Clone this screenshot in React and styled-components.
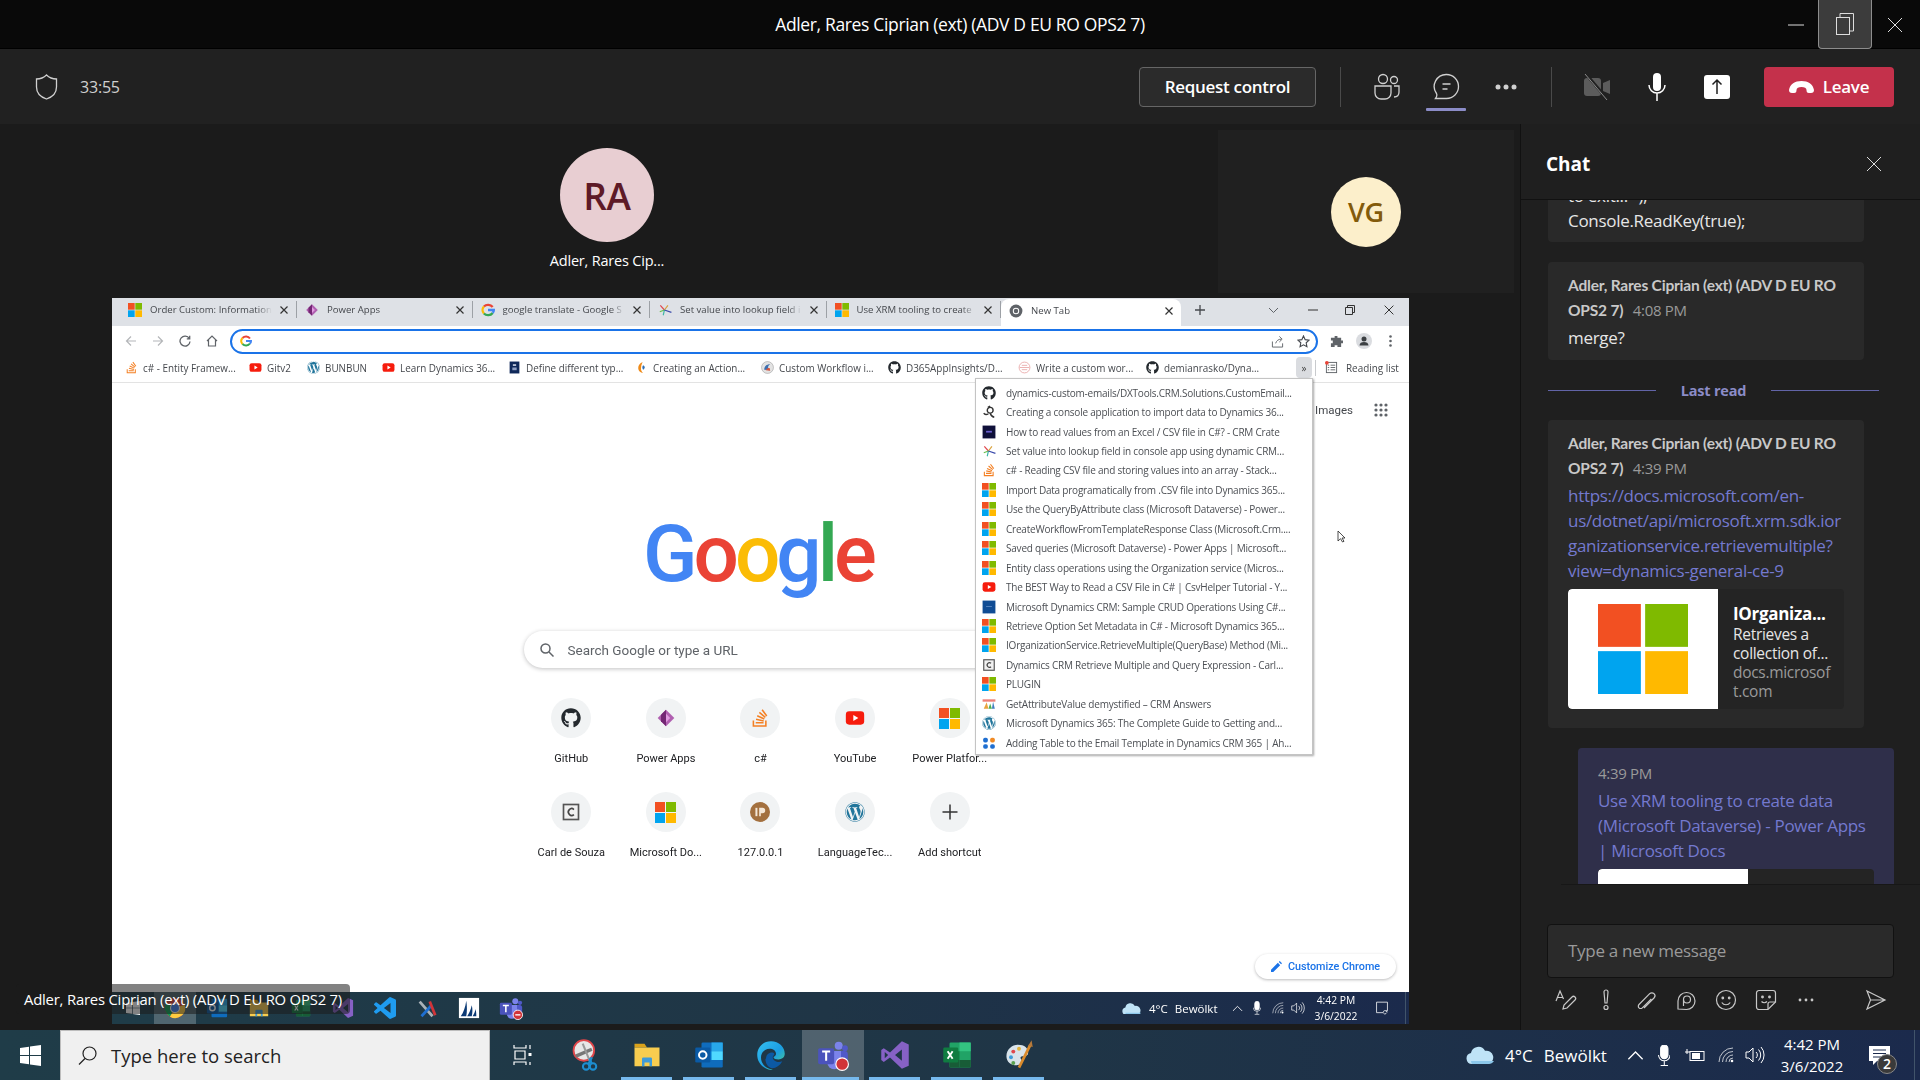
import styled, { createGlobalStyle } from "styled-components";
import { FaGithub, FaWordpress, FaStackOverflow } from "react-icons/fa";

const uiFont = `"Open Sans", "Noto Sans", sans-serif`;

const GlobalStyle = createGlobalStyle`
  html, body {
    margin: 0;
    width: 1920px;
    height: 1080px;
    overflow: hidden;
    background: #1b1b1b;
    font-family: ${uiFont};
  }
  * { box-sizing: border-box; }
`;

const tabs = [
  { title: "Order Custom: Information:", icon: "ms", w: 177 },
  { title: "Power Apps", icon: "powerapps", w: 176 },
  { title: "google translate - Google S", icon: "google", w: 178 },
  { title: "Set value into lookup field i", icon: "spark", w: 177 },
  { title: "Use XRM tooling to create", icon: "ms", w: 175 },
];

const bookmarks = [
  { label: "c# - Entity Framew...", icon: "so", w: 124 },
  { label: "Gitv2", icon: "yt", w: 58 },
  { label: "BUNBUN", icon: "wp", w: 75 },
  { label: "Learn Dynamics 36...", icon: "yt", w: 126 },
  { label: "Define different typ...", icon: "navy", w: 127 },
  { label: "Creating an Action...", icon: "flame", w: 126 },
  { label: "Custom Workflow i...", icon: "badge", w: 127 },
  { label: "D365AppInsights/D...", icon: "gh", w: 130 },
  { label: "Write a custom wor...", icon: "pink", w: 128 },
  { label: "demianrasko/Dyna...", icon: "gh", w: 150 },
];

const folderItems = [
  { label: "dynamics-custom-emails/DXTools.CRM.Solutions.CustomEmail...", icon: "gh" },
  { label: "Creating a console application to import data to Dynamics 36...", icon: "swirl" },
  { label: "How to read values from an Excel / CSV file in C#? - CRM Crate", icon: "crate" },
  { label: "Set value into lookup field in console app using dynamic CRM...", icon: "spark" },
  { label: "c# - Reading CSV file and storing values into an array - Stack...", icon: "so" },
  { label: "Import Data programatically from .CSV file into Dynamics 365...", icon: "ms" },
  { label: "Use the QueryByAttribute class (Microsoft Dataverse) - Power...", icon: "ms" },
  { label: "CreateWorkflowFromTemplateResponse Class (Microsoft.Crm....", icon: "ms" },
  { label: "Saved queries (Microsoft Dataverse) - Power Apps | Microsoft...", icon: "ms" },
  { label: "Entity class operations using the Organization service (Micros...", icon: "ms" },
  { label: "The BEST Way to Read a CSV File in C# | CsvHelper Tutorial - Y...", icon: "yt" },
  { label: "Microsoft Dynamics CRM: Sample CRUD Operations Using C#...", icon: "dyn" },
  { label: "Retrieve Option Set Metadata in C# - Microsoft Dynamics 365...", icon: "ms" },
  { label: "IOrganizationService.RetrieveMultiple(QueryBase) Method (Mi...", icon: "ms" },
  { label: "Dynamics CRM Retrieve Multiple and Query Expression - Carl...", icon: "carl" },
  { label: "PLUGIN", icon: "ms" },
  { label: "GetAttributeValue demystified – CRM Answers", icon: "chart" },
  { label: "Microsoft Dynamics 365: The Complete Guide to Getting and...", icon: "wp" },
  { label: "Adding Table to the Email Template in Dynamics CRM 365 | Ah...", icon: "dots" },
];

const shortcuts = [
  { label: "GitHub", icon: "gh" },
  { label: "Power Apps", icon: "powerapps" },
  { label: "c#", icon: "so" },
  { label: "YouTube", icon: "yt" },
  { label: "Power Platfor...", icon: "ms" },
  { label: "Carl de Souza", icon: "carl" },
  { label: "Microsoft Do...", icon: "ms" },
  { label: "127.0.0.1", icon: "ip" },
  { label: "LanguageTec...", icon: "wp" },
  { label: "Add shortcut", icon: "plus" },
];

/* ---------- favicons and app icons ---------- */

const MsLogo = ({ size = 14 }) => (
  <svg width={size} height={size} viewBox="0 0 21 21">
    <rect x="0" y="0" width="10" height="10" fill="#f25022" />
    <rect x="11" y="0" width="10" height="10" fill="#7fba00" />
    <rect x="0" y="11" width="10" height="10" fill="#00a4ef" />
    <rect x="11" y="11" width="10" height="10" fill="#ffb900" />
  </svg>
);

const Favicon = ({ kind, size = 14 }) => {
  const box = { width: size, height: size, viewBox: "0 0 24 24" };
  switch (kind) {
    case "ms":
      return <MsLogo size={size} />;
    case "gh":
      return <FaGithub size={size} color="#24292e" />;
    case "wp":
      return <FaWordpress size={size} color="#21759b" />;
    case "so":
      return <FaStackOverflow size={size} color="#f48024" />;
    case "yt":
      return (
        <svg {...box}>
          <rect x="1" y="4" width="22" height="16" rx="4" fill="#f61c0d" />
          <path d="M10 8.5l6 3.5-6 3.5z" fill="#fff" />
        </svg>
      );
    case "powerapps":
      return (
        <svg {...box}>
          <path d="M12 2l10 10-10 10L2 12z" fill="#b05fb0" />
          <path d="M12 2l-6 6v8l6 6z" fill="#742774" />
          <path d="M12 7l5 5-5 5z" fill="#e29be2" />
        </svg>
      );
    case "google":
      return (
        <svg {...box} fill="none" strokeWidth="4">
          <path d="M20 7a10 10 0 0 0-15-1" stroke="#ea4335" />
          <path d="M5 6a9 9 0 0 0 0 12" stroke="#fbbc05" />
          <path d="M5 18a10 10 0 0 0 15-1" stroke="#34a853" />
          <path d="M20 17c1.400-1.400 2-3 2-5H12" stroke="#4285f4" />
        </svg>
      );
    case "spark":
      return (
        <svg {...box} fill="none" strokeWidth="2">
          <path d="M11 12L4 4" stroke="#e0474c" />
          <path d="M11 12L3 15" stroke="#6abf4b" />
          <path d="M11 12l-2 9" stroke="#3fb6a8" />
          <path d="M11 12l6-8" stroke="#d9a13b" />
          <path d="M11 12l12 4" stroke="#3949ab" />
        </svg>
      );
    case "navy":
      return (
        <svg {...box}>
          <rect x="3" y="1" width="18" height="22" fill="#10295a" />
          <rect x="9" y="6" width="6" height="3" fill="#cfd6e6" />
          <rect x="8" y="12" width="8" height="5" fill="#8fa0c4" />
        </svg>
      );
    case "flame":
      return (
        <svg {...box}>
          <path d="M14 2C8 5 6 9 6 13c0 5 4 9 9 9-3-2-4-5-4-8 0-4 1-8 3-12z" fill="#ef8a17" />
          <path d="M15 8c-2 2-2 6 0 8 2-1 3-3 3-4 0-2-1-3-3-4z" fill="#2f6fb5" />
        </svg>
      );
    case "badge":
      return (
        <svg {...box}>
          <circle cx="12" cy="12" r="11" fill="#e3e3e3" stroke="#9a9a9a" />
          <path d="M6 16c0-6 4-10 11-10-3 2-4 4-4 6l4 5z" fill="#3c6fb0" />
          <path d="M9 17c1-3 3-5 7-4l1 5z" fill="#d9573f" />
        </svg>
      );
    case "pink":
      return (
        <svg {...box} fill="none" stroke="#e8a2a2" strokeWidth="1.5">
          <circle cx="12" cy="12" r="10" />
          <path d="M3 12h18M7 8h10M7 16h10" />
        </svg>
      );
    case "swirl":
      return (
        <svg {...box} fill="none" stroke="#333" strokeWidth="2.4">
          <path d="M3 14c2 3 5 3 8 1" />
          <circle cx="14" cy="9" r="5" />
          <path d="M14 14c1 3 3 6 7 7M10 4l4-2" />
        </svg>
      );
    case "crate":
      return (
        <svg {...box}>
          <rect x="1" y="1" width="22" height="22" fill="#0f1039" />
          <rect x="7" y="10" width="10" height="3" fill="#6b5fd0" />
        </svg>
      );
    case "dyn":
      return (
        <svg {...box}>
          <rect x="1" y="1" width="22" height="22" fill="#0f4c94" />
          <rect x="7" y="11" width="10" height="1" fill="#7fa5d8" />
        </svg>
      );
    case "carl":
      return (
        <svg {...box}>
          <rect x="3" y="3" width="18" height="18" fill="#f1f1f1" stroke="#555" strokeWidth="2" />
          <path d="M15.500 9a4 4 0 1 0 0 6" fill="none" stroke="#444" strokeWidth="2" />
        </svg>
      );
    case "chart":
      return (
        <svg {...box}>
          <rect x="1" y="4" width="22" height="4" fill="#ee7f76" />
          <path d="M3 20l5-11 3 11z" fill="#e8a33d" />
          <path d="M11 20l3-9 3 9z" fill="#4caf50" />
          <path d="M17 20l2-12 3 12z" fill="#3f7fbf" />
        </svg>
      );
    case "dots":
      return (
        <svg {...box}>
          <rect x="2" y="3" width="8" height="8" rx="3" fill="#1f6fd1" />
          <rect x="14" y="3" width="8" height="8" rx="3" fill="#f08a24" />
          <rect x="2" y="14" width="8" height="8" rx="3" fill="#1f6fd1" />
          <rect x="14" y="14" width="8" height="8" rx="3" fill="#1f6fd1" />
        </svg>
      );
    case "ip":
      return (
        <svg {...box}>
          <circle cx="12" cy="12" r="12" fill="#a3703f" />
          <rect x="6.500" y="7" width="2.400" height="10" fill="#f4e6d6" />
          <path d="M11 17V7h4a3 3 0 0 1 0 6.500h-2V17z" fill="#f4e6d6" />
        </svg>
      );
    case "plus":
      return (
        <svg {...box} fill="none" stroke="#333" strokeWidth="1.8">
          <path d="M12 3v18M3 12h18" />
        </svg>
      );
    case "chrome":
      return (
        <svg {...box}>
          <circle cx="12" cy="12" r="11" fill="#5f6368" />
          <circle cx="12" cy="12" r="5.500" fill="#fff" />
          <circle cx="12" cy="12" r="3.800" fill="#5f6368" />
        </svg>
      );
    default:
      return null;
  }
};

const ChromeApp = ({ size }) => (
  <svg width={size} height={size} viewBox="0 0 24 24">
    <circle cx="12" cy="12" r="11" fill="#db4437" />
    <path d="M12 12L6.500 21.500A11 11 0 0 1 2.500 6.500z" fill="#0f9d58" />
    <path d="M12 12l10.500-3.500A11 11 0 0 1 6.500 21.500z" fill="#ffcd40" />
    <circle cx="12" cy="12" r="5.500" fill="#fff" />
    <circle cx="12" cy="12" r="4.300" fill="#4285f4" />
  </svg>
);

const OutlookApp = ({ size }) => (
  <svg width={size} height={size} viewBox="0 0 24 24">
    <rect x="6" y="2" width="17" height="20" rx="1" fill="#0f6cbd" />
    <rect x="14" y="2" width="9" height="7" fill="#28a8ea" />
    <rect x="6" y="9" width="8" height="7" fill="#0078d4" />
    <rect x="14" y="9" width="9" height="7" fill="#50d9ff" />
    <rect x="1" y="6" width="12" height="12" rx="1" fill="#0a5aa5" />
    <circle cx="7" cy="12" r="3" fill="none" stroke="#fff" strokeWidth="1.6" />
  </svg>
);

const ExplorerApp = ({ size }) => (
  <svg width={size} height={size} viewBox="0 0 24 24">
    <path d="M2 3h8l2 3H2z" fill="#d9a21b" />
    <rect x="2" y="6" width="20" height="15" fill="#f8cd4f" />
    <path d="M8 21v-6a1 1 0 0 1 1-1h6a1 1 0 0 1 1 1v6h-2v-3h-4v3z" fill="#3f9bd8" />
  </svg>
);

const ExcelApp = ({ size }) => (
  <svg width={size} height={size} viewBox="0 0 24 24">
    <rect x="6" y="2" width="17" height="20" rx="1" fill="#21a366" />
    <rect x="14" y="2" width="9" height="7" fill="#33c481" />
    <rect x="6" y="9" width="8" height="7" fill="#107c41" />
    <rect x="14" y="16" width="9" height="6" fill="#185c37" />
    <rect x="6" y="16" width="8" height="6" fill="#185c37" />
    <rect x="1" y="6" width="12" height="12" rx="1" fill="#107c41" />
    <path d="M4.500 9l4 6M8.500 9l-4 6" stroke="#fff" strokeWidth="1.500" />
  </svg>
);

const VsApp = ({ size }) => (
  <svg width={size} height={size} viewBox="0 0 24 24">
    <path
      fillRule="evenodd"
      d="M17.500 1L23 3.500v17L17.500 23 8 14l-5 3.500-2-1.500V8l2-1.500L8 10zM17.500 7.500L12 12l5.500 4.500zM3.800 9.500v5L6.500 12z"
      fill="#8661c5"
    />
  </svg>
);

const VsCodeApp = ({ size }) => (
  <svg width={size} height={size} viewBox="0 0 24 24">
    <path
      d="M23.150 2.587L18.210.21a1.494 1.494 0 0 0-1.705.29l-9.460 8.630-4.120-3.128a.999.999 0 0 0-1.276.057L.327 7.261A1 1 0 0 0 .326 8.740L3.899 12 .326 15.260a1 1 0 0 0 .001 1.479L1.650 17.940a.999.999 0 0 0 1.276.057l4.120-3.128 9.460 8.630a1.492 1.492 0 0 0 1.704.29l4.942-2.377A1.500 1.500 0 0 0 24 20.060V3.939a1.500 1.500 0 0 0-.850-1.352zm-5.146 14.861L10.826 12l7.178-5.448v10.896z"
      fill="#1f9cf0"
    />
  </svg>
);

const EdgeApp = ({ size }) => (
  <svg width={size} height={size} viewBox="0 0 24 24">
    <defs>
      <linearGradient id="edgeGrad" x1="0" y1="0" x2="1" y2="1">
        <stop offset="0" stopColor="#35c1f1" />
        <stop offset="0.55" stopColor="#1b9de2" />
        <stop offset="1" stopColor="#54d77c" />
      </linearGradient>
    </defs>
    <path
      d="M12 1c6.500 0 11 4.800 11 10 0 3-2.500 4.500-5 4.500-2 0-4-.6-4-2 1.500-.5 2-1.500 2-2.500 0-2.500-2.500-4-5-4-4 0-7 3-7 7 0 5 4 9 9.500 9.500-.5 0-1 .5-1.500.5C5.500 23 1 18 1 12 1 6 5.500 1 12 1z"
      fill="url(#edgeGrad)"
    />
    <path d="M8 15c0-3 2-5 5-5 1.500 0 2 1 1.500 2-1.500 1-1.500 3 .5 4.500 1.500 1 3.500 1.500 6 .5-1.800 3.500-5 5.500-8 5.500-3 0-5.500-3.500-5.500-7.500z" fill="#0c59a4" />
  </svg>
);

const TeamsApp = ({ size, status }) => (
  <svg width={size} height={size} viewBox="0 0 28 28">
    <circle cx="19" cy="6" r="3.500" fill="#7b83eb" />
    <circle cx="24.500" cy="8" r="2.500" fill="#5059c9" />
    <rect x="16" y="10.500" width="11" height="11" rx="3" fill="#5059c9" />
    <path d="M9 10.500h12v10a6 6 0 0 1-12 0z" fill="#7b83eb" />
    <rect x="1" y="8" width="14" height="14" rx="1.500" fill="#4b53bc" />
    <path d="M4.500 11h7M8 11v8" stroke="#fff" strokeWidth="1.800" />
    <circle cx="22" cy="22" r="5.500" fill="#d13438" stroke="#fff" strokeWidth="1" />
    {status && <path d="M19 22h6" stroke="#fff" strokeWidth="1.600" />}
  </svg>
);

const SnipApp = ({ size }) => (
  <svg width={size} height={size} viewBox="0 0 28 28" fill="none">
    <circle cx="13" cy="10" r="9" fill="#e7e7e7" stroke="#e0464a" strokeWidth="1.600" />
    <path d="M6 15l14-6" stroke="#777" strokeWidth="3" />
    <path d="M12 4l6 15" stroke="#999" strokeWidth="1.800" />
    <path d="M18 17l2 5" stroke="#1d8fd1" strokeWidth="2" />
    <circle cx="21" cy="24" r="2.800" stroke="#1d8fd1" strokeWidth="1.800" />
    <path d="M20 16l-3 6" stroke="#1d8fd1" strokeWidth="2" />
    <circle cx="15" cy="24" r="2.800" stroke="#1d8fd1" strokeWidth="1.800" />
  </svg>
);

const PaintApp = ({ size }) => (
  <svg width={size} height={size} viewBox="0 0 28 28">
    <path d="M3 15c0-6 5-10 10-10 6 0 9 3 9 7 0 3-3 3-5 3-2 0-2 2-1 3 1 2 0 5-4 5-5 0-9-3-9-8z" fill="#d8e3ea" />
    <circle cx="9" cy="11" r="1.700" fill="#e0474c" />
    <circle cx="14" cy="8.500" r="1.700" fill="#e2b23b" />
    <circle cx="7" cy="16" r="1.700" fill="#3f9bd8" />
    <circle cx="9" cy="21" r="1.700" fill="#59a14f" />
    <path d="M14 25L24 5" stroke="#d98a2b" strokeWidth="2.400" />
    <path d="M22 6l3-5 1 6z" fill="#b5793a" />
  </svg>
);

const ToolApp = ({ size }) => (
  <svg width={size} height={size} viewBox="0 0 24 24" fill="none">
    <path d="M4 5l14 16" stroke="#aab2b8" strokeWidth="3" />
    <path d="M6 21L17 9" stroke="#1f6fd1" strokeWidth="3" />
    <path d="M15 5l6 15" stroke="#d13438" strokeWidth="3" />
  </svg>
);

const DynApp = ({ size }) => (
  <svg width={size} height={size} viewBox="0 0 24 24">
    <rect x="1" y="1" width="22" height="22" fill="#fff" />
    <path d="M3 21C6 17 8 11 9 4c1 6 1 12 0 17zM10 21c2-3 4-7 5-12 1 4 1 8 0 12zM16 21c1-2 3-5 3-8 1 3 1 6 1 8z" fill="#0b3a75" />
  </svg>
);

const WindowsLogo = ({ size = 21 }) => (
  <svg width={size} height={size} viewBox="0 0 21 21" fill="#fff">
    <path d="M0 3l9-1.300v8.300H0zM10 1.500L21 0v10H10zM0 11h9v8.300L0 18zM10 11h11v10l-11-1.500z" />
  </svg>
);

const CloudIcon = ({ w = 28 }) => (
  <svg width={w} height={w * 0.68} viewBox="0 0 28 19">
    <path d="M6 19a5.500 5.500 0 0 1-1-10.900A7.500 7.500 0 0 1 19 5.800 6.500 6.500 0 0 1 22 19z" fill="#bfe3f7" />
    <path d="M6 19a5.500 5.500 0 0 1-1-3h23a6.500 6.500 0 0 1-6 3z" fill="#8cc7ea" />
  </svg>
);

const ChevronUp = ({ w = 16 }) => (
  <svg width={w} height={w * 0.6} viewBox="0 0 16 10" fill="none" stroke="#fff" strokeWidth="1.300">
    <path d="M1 9l7-7 7 7" />
  </svg>
);

const MicTray = ({ h = 20 }) => (
  <svg width={h * 0.6} height={h} viewBox="0 0 12 20" fill="none" stroke="#fff" strokeWidth="1">
    <rect x="2.500" y="0" width="7" height="13" rx="3.500" fill="#fff" />
    <path d="M.5 9.500a5.500 5.500 0 0 0 11 0M6 15v4M2.500 19.500h7" />
  </svg>
);

const BatteryIcon = ({ w = 20 }) => (
  <svg width={w} height={w * 0.7} viewBox="0 0 20 14" fill="none" stroke="#fff">
    <rect x="5" y="3.500" width="14" height="9" />
    <rect x="7" y="5" width="8" height="6" fill="#fff" stroke="none" />
    <path d="M0 4h5M2 1v5" />
  </svg>
);

const WifiIcon = ({ w = 16 }) => (
  <svg width={w} height={w} viewBox="0 0 16 16" fill="none" stroke="#fff" strokeWidth=".9">
    <path d="M1 15A14 14 0 0 1 15 1M4.500 15A10.500 10.500 0 0 1 15 4.500M8 15a7 7 0 0 1 7-7M11 15a4 4 0 0 1 4-4" opacity=".8" />
    <circle cx="14" cy="14" r="1.300" fill="#fff" stroke="none" />
  </svg>
);

const VolumeIcon = ({ w = 20 }) => (
  <svg width={w} height={w} viewBox="0 0 20 20" fill="none" stroke="#fff" strokeWidth="1">
    <path d="M1 7h3l4-4v14l-4-4H1zM11 7a4 4 0 0 1 0 6M13.500 4.500a8 8 0 0 1 0 11M16 2a12 12 0 0 1 0 16" />
  </svg>
);

const NoteIcon = ({ w = 18 }) => (
  <svg width={w} height={w} viewBox="0 0 18 18" fill="none" stroke="#fff">
    <path d="M2 1.500h14v11h-4c-1 0-1 1-1.500 2.500H2z" />
    <path d="M11 16c1 1 3 1 4-1M14 13l2 1" />
  </svg>
);

/* ---------- top bars ---------- */

const Frame = styled.div`
  width: 1920px;
  height: 1080px;
  display: flex;
  flex-direction: column;
`;

const TitleBar = styled.header`
  height: 49px;
  flex-shrink: 0;
  background: #090909;
  border-bottom: 1px solid #000;
  display: flex;
  align-items: center;
  justify-content: center;
  position: relative;
`;

const WindowTitle = styled.div`
  color: #fff;
  font-size: 17.5px;
  letter-spacing: -0.35px;
`;

const WindowControls = styled.div`
  position: absolute;
  right: 0;
  top: 0;
  height: 49px;
  display: flex;
  align-items: stretch;
  padding-right: 2px;
`;

const WinBtn = styled.div`
  width: ${(p) => p.$w}px;
  display: flex;
  align-items: center;
  justify-content: center;
  ${(p) => p.$hot && "background: #3c3c3c; border: 1px solid #8d8d8d; border-top: 0; border-radius: 0 0 4px 4px;"}
`;

const MeetingBar = styled.div`
  height: 75px;
  flex-shrink: 0;
  background: #212121;
  display: flex;
  align-items: center;
  padding: 0 26px 0 35px;
`;

const Timer = styled.span`
  color: #d0d0d0;
  font-size: 16px;
  margin-left: 22px;
  letter-spacing: -0.2px;
`;

const Spacer = styled.div`
  flex: 1;
`;

const RequestBtn = styled.div`
  width: 177px;
  height: 40px;
  background: #2b2b2b;
  border: 1px solid #666;
  border-radius: 4px;
  color: #fff;
  font-size: 17px;
  font-weight: 600;
  letter-spacing: -0.3px;
  display: flex;
  align-items: center;
  justify-content: center;
`;

const BarDivider = styled.div`
  width: 1px;
  height: 40px;
  background: #4a4a4a;
  margin: 0 ${(p) => p.$mr ?? 15}px 0 ${(p) => p.$ml ?? 24}px;
`;

const BarIcon = styled.div`
  width: ${(p) => p.$w ?? 60}px;
  height: 44px;
  display: flex;
  align-items: center;
  justify-content: center;
  position: relative;
  ${(p) =>
    p.$active &&
    `&::after {
      content: "";
      position: absolute;
      left: 10px;
      right: 10px;
      bottom: -2px;
      height: 3px;
      background: #8b8cc7;
      border-radius: 1px;
    }`}
`;

const LeaveBtn = styled.div`
  width: 130px;
  height: 40px;
  margin-left: 17px;
  background: #c4314b;
  border-radius: 4px;
  color: #fff;
  font-size: 17px;
  font-weight: 600;
  letter-spacing: -0.3px;
  display: flex;
  align-items: center;
  justify-content: center;
  gap: 9px;
`;

/* ---------- stage ---------- */

const Body = styled.div`
  flex: 1;
  display: flex;
  min-height: 0;
`;

const Stage = styled.main`
  width: 1520px;
  background: #1b1b1b;
  display: flex;
  flex-direction: column;
  position: relative;
`;

const TileRow = styled.div`
  height: 174px;
  flex-shrink: 0;
  display: flex;
`;

const MainTile = styled.div`
  flex: 1;
  display: flex;
  flex-direction: column;
  align-items: center;
  padding: 24px 4px 0 0;
`;

const Avatar = styled.div`
  width: ${(p) => p.$size}px;
  height: ${(p) => p.$size}px;
  border-radius: 50%;
  background: ${(p) => p.$bg};
  color: ${(p) => p.$fg};
  font-size: ${(p) => p.$font}px;
  font-weight: 600;
  display: flex;
  align-items: center;
  justify-content: center;
  letter-spacing: -0.3px;
`;

const TileName = styled.div`
  margin-top: 9px;
  color: #fff;
  font-size: 14.5px;
  line-height: 20px;
  letter-spacing: -0.2px;
`;

const SideTile = styled.div`
  width: 296px;
  height: 163px;
  margin: 6px 6px 0 0;
  background: #202020;
  display: flex;
  align-items: center;
  justify-content: center;
`;

const Share = styled.div`
  width: 1297px;
  height: 726px;
  margin-left: 112px;
  display: flex;
  flex-direction: column;
  filter: blur(0.3px);
`;

const CaptionTag = styled.div`
  position: absolute;
  left: 16px;
  bottom: 16px;
  height: 30px;
  padding: 0 8px;
  display: flex;
  align-items: center;
  border-radius: 4px;
  background: rgba(27, 27, 27, 0.55);
  color: #fff;
  font-size: 14.85px;
  letter-spacing: -0.2px;
`;

/* ---------- remote chrome ---------- */

const ChromeWindow = styled.div`
  flex: 1;
  min-height: 0;
  display: flex;
  flex-direction: column;
  position: relative;
  background: #fff;
`;

const TabStrip = styled.div`
  height: 28px;
  flex-shrink: 0;
  background: #dee1e6;
  display: flex;
  align-items: stretch;
  padding-left: 8px;
  color: #45484d;
  font-size: 9.6px;
`;

const Tab = styled.div`
  width: ${(p) => p.$w}px;
  display: flex;
  align-items: center;
  gap: 8px;
  padding: 0 8px;
  position: relative;
  ${(p) =>
    p.$active
      ? "background: #fff; border-radius: 8px 8px 0 0; margin-top: 1px; padding-bottom: 4px;"
      : "border-right: 1px solid #9da1a6; margin: 3px 0 8px; "}
`;

const TabTitle = styled.span`
  flex: 1;
  white-space: nowrap;
  overflow: hidden;
  -webkit-mask-image: linear-gradient(90deg, #000 88%, transparent);
  mask-image: linear-gradient(90deg, #000 88%, transparent);
`;

const TabClose = styled.span`
  width: 8px;
  height: 8px;
  display: flex;
  flex-shrink: 0;
`;

const StripTool = styled.div`
  width: ${(p) => p.$w}px;
  margin-left: ${(p) => p.$ml ?? 0}px;
  padding-bottom: 4px;
  display: flex;
  align-items: center;
  justify-content: center;
`;

const ChromeToolbar = styled.div`
  height: 30px;
  flex-shrink: 0;
  display: flex;
  align-items: center;
  padding-left: 5px;
`;

const NavBtn = styled.div`
  width: 27px;
  height: 24px;
  display: flex;
  align-items: center;
  justify-content: center;
`;

const UrlBox = styled.div`
  width: 1088px;
  height: 25px;
  margin: 0 5px;
  border: 2px solid #1a73e8;
  border-radius: 13px;
  display: flex;
  align-items: center;
  padding: 0 6px 0 8px;
`;

const UrlTools = styled.div`
  margin-left: auto;
  display: flex;
  align-items: center;
  gap: 13px;
`;

const BookmarkBar = styled.div`
  height: 27px;
  flex-shrink: 0;
  display: flex;
  align-items: center;
  padding: 0 0 3px 13px;
  border-bottom: 1px solid #e3e3e3;
  color: #45484d;
  font-size: 9.9px;
`;

const Bookmark = styled.div`
  width: ${(p) => p.$w}px;
  display: flex;
  align-items: center;
  gap: 5px;
  white-space: nowrap;
`;

const MoreMarks = styled.div`
  width: 16px;
  height: 21px;
  border-radius: 4px;
  background: #dadce0;
  display: flex;
  align-items: center;
  justify-content: center;
  font-size: 10px;
  color: #444;
`;

const BarSep = styled.div`
  width: 1px;
  height: 16px;
  background: #c8cacd;
  margin: 0 9px 0 3px;
`;

const ReadingList = styled.div`
  display: flex;
  align-items: center;
  gap: 8px;
  white-space: nowrap;
`;

const FolderMenu = styled.div`
  position: absolute;
  left: 863px;
  top: 80px;
  width: 338px;
  height: 377px;
  padding: 4px 0;
  background: #fff;
  border: 1px solid #c4c4c4;
  box-shadow: 1px 1px 2px rgba(0, 0, 0, 0.35);
  z-index: 2;
`;

const FolderRow = styled.div`
  height: 19.44px;
  display: flex;
  align-items: center;
  padding-left: 6px;
  gap: 10px;
  color: #4c4f54;
  font-size: 10px;
  letter-spacing: -0.22px;
  white-space: nowrap;

  svg {
    flex-shrink: 0;
  }
`;

const NewTabPage = styled.div`
  flex: 1;
  min-height: 0;
  display: flex;
  flex-direction: column;
  align-items: center;
  position: relative;
  font-family: Roboto, "Open Sans", sans-serif;
`;

const TopLinks = styled.div`
  align-self: stretch;
  height: 54px;
  display: flex;
  align-items: center;
  justify-content: flex-end;
  padding-right: 21px;
  gap: 21px;
  color: #45484d;
  font-size: 11.5px;
`;

const GoogleMark = styled.div`
  margin: 67px 5px 0 0;
  height: 127px;
  font-family: Roboto, sans-serif;
  font-size: 80px;
  line-height: 100px;
  letter-spacing: -4px;
  font-weight: 500;
  display: flex;
`;

const Letter = styled.span`
  color: ${(p) => p.$c};
`;

const SearchBar = styled.div`
  width: 474px;
  height: 37px;
  flex-shrink: 0;
  border-radius: 19px;
  background: #fff;
  box-shadow: 0 1px 4px rgba(32, 33, 36, 0.28);
  display: flex;
  align-items: center;
  padding-left: 16px;
  gap: 14px;
  color: #5f6368;
  font-size: 13.5px;
`;

const ShortcutGrid = styled.div`
  margin-top: 30px;
  width: 473px;
  display: grid;
  grid-template-columns: repeat(5, 1fr);
  grid-auto-rows: 94.4px;
`;

const Shortcut = styled.div`
  display: flex;
  flex-direction: column;
  align-items: center;
  color: #202124;
  font-size: 11px;
  white-space: nowrap;
`;

const ShortcutDisc = styled.div`
  width: 40px;
  height: 40px;
  flex-shrink: 0;
  border-radius: 50%;
  background: #f1f3f4;
  display: flex;
  align-items: center;
  justify-content: center;
  margin-bottom: 14px;
`;

const CustomizeBtn = styled.div`
  margin: auto 13px 13px 0;
  align-self: flex-end;
  width: 141px;
  height: 25px;
  border-radius: 13px;
  background: #fff;
  box-shadow: 0 1px 3px rgba(32, 33, 36, 0.3);
  color: #1a73e8;
  font-size: 10.8px;
  font-weight: 500;
  display: flex;
  align-items: center;
  justify-content: center;
  gap: 6px;
`;

const Cursor = styled.svg`
  position: absolute;
  left: 1225px;
  top: 232px;
  z-index: 3;
`;

/* ---------- taskbars ---------- */

const Taskbar = styled.div`
  height: ${(p) => p.$h}px;
  flex-shrink: 0;
  display: flex;
  align-items: stretch;
  background: linear-gradient(90deg, #1f3c48 0%, #1f3546 55%, #1b2a4c 100%);
  color: #fff;
`;

const TaskSlot = styled.div`
  width: ${(p) => p.$w}px;
  flex-shrink: 0;
  display: flex;
  align-items: center;
  justify-content: center;
  position: relative;
  ${(p) => p.$lit && "background: rgba(255,255,255,.22);"}
  ${(p) =>
    p.$running &&
    `&::after {
      content: "";
      position: absolute;
      left: ${p.$lit ? 0 : 5}px;
      right: ${p.$lit ? 5 : 6}px;
      bottom: 0;
      height: 3px;
      background: #76b9ed;
    }`}
`;

const WinStart = styled.div`
  width: 60px;
  flex-shrink: 0;
  display: flex;
  align-items: center;
  justify-content: center;
`;

const SearchField = styled.div`
  width: 430px;
  flex-shrink: 0;
  background: #f0f0f0;
  border: 1px solid #bdbdbd;
  border-width: 1px 1px 0 1px;
  display: flex;
  align-items: center;
  padding-left: 17px;
  gap: 14px;
  color: #222;
  font-size: 18.5px;
`;

const Tray = styled.div`
  margin-left: auto;
  display: flex;
  align-items: center;
  font-size: ${(p) => p.$font}px;
  position: relative;
`;

const TrayItem = styled.div`
  width: ${(p) => p.$w}px;
  margin-left: ${(p) => p.$ml ?? 0}px;
  flex-shrink: 0;
  display: flex;
  align-items: center;
  justify-content: ${(p) => (p.$start ? "flex-start" : "center")};
  gap: ${(p) => p.$gap ?? 0}px;
  white-space: nowrap;
  position: relative;
`;

const Clock = styled.div`
  text-align: center;
  font-size: ${(p) => p.$size}px;
  line-height: ${(p) => p.$lh}px;
`;

const TrayEdge = styled.div`
  width: 1px;
  height: 100%;
  background: #41546a;
  margin: 0 ${(p) => p.$mr}px 0 ${(p) => p.$ml}px;
`;

const NoteBadge = styled.span`
  position: absolute;
  right: -3px;
  bottom: -9px;
  width: 20px;
  height: 20px;
  border-radius: 50%;
  border: 1px solid #888;
  background: #3a3a3a;
  font-size: 14px;
  font-weight: 600;
  display: flex;
  align-items: center;
  justify-content: center;
`;

/* ---------- chat ---------- */

const ChatPanel = styled.aside`
  flex: 1;
  min-width: 0;
  background: #1f1f1f;
  border-left: 1px solid #111;
  display: flex;
  flex-direction: column;
`;

const ChatHeader = styled.div`
  height: 76px;
  flex-shrink: 0;
  border-bottom: 1px solid #111;
  display: flex;
  align-items: center;
  justify-content: space-between;
  padding: 5px 38px 0 25px;
  color: #fff;
  font-size: 19px;
  font-weight: 700;
`;

const MessageList = styled.div`
  height: 684px;
  flex-shrink: 0;
  overflow: hidden;
  display: flex;
  flex-direction: column;
  padding-left: 27px;
`;

const Bubble = styled.div`
  width: 316px;
  margin-left: ${(p) => (p.$own ? 30 : 0)}px;
  margin-top: ${(p) => p.$top ?? 20}px;
  flex-shrink: 0;
  padding: ${(p) => (p.$own ? 12 : 11)}px 20px ${(p) => p.$pb ?? 9}px;
  border-radius: 4px;
  background: ${(p) => (p.$own ? "#2f2f4a" : "#292929")};
  color: #e6e6e6;
  font-size: 17px;
  line-height: 25px;
  letter-spacing: -0.3px;
`;

const Author = styled.div`
  font-family: Lato, "Open Sans", sans-serif;
  font-size: 15.5px;
  font-weight: 700;
  color: #c8c8c8;
  letter-spacing: -0.2px;
`;

const Stamp = styled.span`
  font-family: "Open Sans", sans-serif;
  font-size: 15px;
  font-weight: 400;
  color: #9a9a9a;
  letter-spacing: -0.3px;
  margin-left: ${(p) => p.$ml ?? 0}px;
`;

const MsgBody = styled.div`
  margin-top: 2px;
`;

const MsgLink = styled.div`
  margin-top: 2px;
  color: #7479cf;
  word-break: break-all;
`;

const LastRead = styled.div`
  height: 20px;
  margin-top: 20px;
  width: 331px;
  flex-shrink: 0;
  display: flex;
  align-items: center;
  justify-content: space-between;
  color: #8b8cc7;
  font-size: 14.5px;
  font-weight: 700;
  letter-spacing: -0.2px;
`;

const ReadLine = styled.div`
  width: 108px;
  height: 1px;
  background: #6264a7;
`;

const LinkCard = styled.div`
  width: 276px;
  height: 120px;
  margin-top: 6px;
  background: #242424;
  border-radius: 4px;
  display: flex;
  overflow: hidden;
`;

const CardImage = styled.div`
  width: 150px;
  flex-shrink: 0;
  background: #fff;
  border-radius: 4px 0 0 4px;
  display: flex;
  align-items: center;
  justify-content: center;
`;

const CardText = styled.div`
  padding: 14px 0 0 15px;
  font-size: 15.5px;
  line-height: 19px;
  white-space: nowrap;
  letter-spacing: -0.3px;
`;

const CardTitle = styled.div`
  color: #fff;
  font-weight: 700;
  font-size: 17px;
  line-height: 22px;
`;

const CardHost = styled.div`
  color: #9a9a9a;
`;

const Composer = styled.div`
  flex: 1;
  border-top: 1px solid #171717;
  margin-left: 40px;
  padding-top: 39px;
`;

const InputBox = styled.div`
  width: 347px;
  height: 54px;
  margin-left: -14px;
  border-radius: 4px;
  border: 1px solid #111;
  background: #2a2a2a;
  color: #9a9a9a;
  font-size: 17px;
  letter-spacing: -0.3px;
  display: flex;
  align-items: center;
  padding: 0 0 2px 20px;
`;

const ComposerTools = styled.div`
  margin: 7px 0 0 -15px;
  display: flex;
  align-items: center;
  width: 350px;
`;

const ComposerTool = styled.div`
  width: 40px;
  height: 30px;
  display: flex;
  align-items: center;
  justify-content: center;
`;

const ThinX = ({ size = 16, color = "#ddd", width = 1 }) => (
  <svg width={size} height={size} viewBox="0 0 16 16" fill="none" stroke={color} strokeWidth={width}>
    <path d="M1 1l14 14M15 1L1 15" />
  </svg>
);

const strokeIcon = { fill: "none", stroke: "#c8c8c8", strokeWidth: 1.2, width: 22, height: 22, viewBox: "0 0 22 22" };

const composerIcons = [
  <svg {...strokeIcon} key="format">
    <path d="M1 12L5 2l3.500 8M2.500 8.500H7.500" />
    <path d="M8 20l1-4 8-8a2 2 0 0 1 3 3l-8 8z" />
  </svg>,
  <svg {...strokeIcon} key="urgent">
    <path d="M9 3a2 2 0 0 1 4 0l-1 11h-2z" />
    <circle cx="11" cy="18.500" r="2" />
  </svg>,
  <svg {...strokeIcon} key="attach">
    <path d="M9 19l10-10a3 3 0 0 0-4.300-4.300L4 15.500a2.300 2.300 0 0 0 3.300 3.300l9-9" />
  </svg>,
  <svg {...strokeIcon} key="loop">
    <path d="M3 20v-8a8.500 8.500 0 1 1 8.500 8.500z" />
    <circle cx="12" cy="10.500" r="3.500" />
    <path d="M8.500 11v6" />
  </svg>,
  <svg {...strokeIcon} key="emoji">
    <circle cx="11" cy="11" r="9.500" />
    <circle cx="7.800" cy="9" r=".8" fill="#c8c8c8" />
    <circle cx="14.200" cy="9" r=".8" fill="#c8c8c8" />
    <path d="M6.800 13.500c2 3 6.400 3 8.400 0" />
  </svg>,
  <svg {...strokeIcon} key="sticker">
    <path d="M4 1.500h14a2.500 2.500 0 0 1 2.500 2.500v9l-7.500 7.500H4A2.500 2.500 0 0 1 1.500 18V4A2.500 2.500 0 0 1 4 1.500z" />
    <path d="M13 20v-5a2 2 0 0 1 2-2h5.500" />
    <circle cx="7.500" cy="8" r=".8" fill="#c8c8c8" />
    <circle cx="14.500" cy="8" r=".8" fill="#c8c8c8" />
    <path d="M6.500 12.500c1.500 1.500 4 1.500 5.500 0" />
  </svg>,
  <svg width="18" height="6" viewBox="0 0 18 6" fill="#c8c8c8" key="more">
    <circle cx="3" cy="3" r="1.400" />
    <circle cx="9" cy="3" r="1.400" />
    <circle cx="15" cy="3" r="1.400" />
  </svg>,
];

const FolderCard = ({ children, logo }) => (
  <LinkCard>
    <CardImage>{logo && <MsLogo size={90} />}</CardImage>
    {children}
  </LinkCard>
);

const ChromeTabs = () => (
  <TabStrip>
    {tabs.map((tab) => (
      <Tab key={tab.title} $w={tab.w}>
        <Favicon kind={tab.icon} size={14} />
        <TabTitle>{tab.title}</TabTitle>
        <TabClose>
          <ThinX size={8} color="#333" width={2.4} />
        </TabClose>
      </Tab>
    ))}
    <Tab $w={180} $active>
      <Favicon kind="chrome" size={14} />
      <TabTitle>New Tab</TabTitle>
      <TabClose>
        <ThinX size={8} color="#333" width={2.4} />
      </TabClose>
    </Tab>
    <StripTool $w={32} $ml={4}>
      <svg width="12" height="12" viewBox="0 0 12 12" stroke="#45484d" strokeWidth="1.300">
        <path d="M6 1v10M1 6h10" />
      </svg>
    </StripTool>
    <StripTool $w={24} $ml={45}>
      <svg width="11" height="7" viewBox="0 0 11 7" fill="none" stroke="#5f6368">
        <path d="M1 1l4.500 4.500L10 1" />
      </svg>
    </StripTool>
    <StripTool $w={36} $ml={10}>
      <svg width="10" height="2" viewBox="0 0 10 2" stroke="#333">
        <path d="M0 1h10" />
      </svg>
    </StripTool>
    <StripTool $w={38}>
      <svg width="10" height="10" viewBox="0 0 10 10" fill="none" stroke="#333">
        <path d="M.5 2.500h7v7h-7zM2.500 2.500v-2h7v7h-2" />
      </svg>
    </StripTool>
    <StripTool $w={40}>
      <ThinX size={10} color="#333" width={1.6} />
    </StripTool>
  </TabStrip>
);

const ChromeBar = () => (
  <ChromeToolbar>
    <NavBtn>
      <svg width="12" height="12" viewBox="0 0 12 12" fill="none" stroke="#b4b6b9" strokeWidth="1.200">
        <path d="M11 6H1.500M6 1.500L1.500 6 6 10.500" />
      </svg>
    </NavBtn>
    <NavBtn>
      <svg width="12" height="12" viewBox="0 0 12 12" fill="none" stroke="#b4b6b9" strokeWidth="1.200">
        <path d="M1 6h9.500M6 1.500L10.500 6 6 10.500" />
      </svg>
    </NavBtn>
    <NavBtn>
      <svg width="12" height="12" viewBox="0 0 12 12" fill="none" stroke="#5f6368" strokeWidth="1.300">
        <path d="M10.300 3.500A5 5 0 1 0 11 6.500M10.700 .8v3H7.800" />
      </svg>
    </NavBtn>
    <NavBtn>
      <svg width="12" height="12" viewBox="0 0 12 12" fill="none" stroke="#5f6368" strokeWidth="1.200">
        <path d="M1 6l5-5 5 5M2.500 5v6h7V5" />
      </svg>
    </NavBtn>
    <UrlBox>
      <Favicon kind="google" size={12} />
      <UrlTools>
        <svg width="13" height="13" viewBox="0 0 14 14" fill="none" stroke="#5f6368">
          <path d="M1.500 7v6h11V9M5 9c1-3 3-4.500 6-4.500M9 1.500l3 3-3 3" />
        </svg>
        <svg width="13" height="13" viewBox="0 0 14 14" fill="none" stroke="#45484d" strokeWidth="1.200">
          <path d="M7 1l1.800 4 4.200.5-3.100 2.900.8 4.300L7 10.600l-3.700 2.100.8-4.300L1 5.500 5.200 5z" />
        </svg>
      </UrlTools>
    </UrlBox>
    <NavBtn>
      <svg width="13" height="13" viewBox="0 0 14 14" fill="#5f6368">
        <path d="M5 1h3v2h4v3h2v3h-2v4H8v-2H5v2H1V9h2V6H1V3h4z" />
      </svg>
    </NavBtn>
    <NavBtn>
      <svg width="16" height="16" viewBox="0 0 16 16">
        <circle cx="8" cy="8" r="8" fill="#dadce0" />
        <circle cx="8" cy="6" r="2.500" fill="#3c4043" />
        <path d="M3.500 12.500c0-2.500 2-3.500 4.500-3.500s4.500 1 4.500 3.500z" fill="#3c4043" />
      </svg>
    </NavBtn>
    <NavBtn>
      <svg width="3" height="12" viewBox="0 0 3 12" fill="#5f6368">
        <circle cx="1.500" cy="1.500" r="1.300" />
        <circle cx="1.500" cy="6" r="1.300" />
        <circle cx="1.500" cy="10.500" r="1.300" />
      </svg>
    </NavBtn>
  </ChromeToolbar>
);

const Bookmarks = () => (
  <BookmarkBar>
    {bookmarks.map((mark) => (
      <Bookmark key={mark.label} $w={mark.w}>
        <Favicon kind={mark.icon} size={13} />
        {mark.label}
      </Bookmark>
    ))}
    <MoreMarks>»</MoreMarks>
    <BarSep />
    <ReadingList>
      <svg width="13" height="13" viewBox="0 0 14 14" fill="none" stroke="#5f6368">
        <rect x="1.500" y="1.500" width="11" height="11" />
        <path d="M6 4.500h5M6 7h5M6 9.500h5M3 4.500h1.500M3 7h1.500M3 9.500h1.500" />
        <circle cx="2" cy="2" r="2" fill="#ea4335" stroke="none" />
      </svg>
      Reading list
    </ReadingList>
  </BookmarkBar>
);

const NewTab = () => (
  <NewTabPage>
    <TopLinks>
      Images
      <svg width="14" height="14" viewBox="0 0 14 14" fill="#5f6368">
        {[2, 7, 12].flatMap((cy) =>
          [2, 7, 12].map((cx) => <circle key={`${cx}-${cy}`} cx={cx} cy={cy} r="1.600" />)
        )}
      </svg>
    </TopLinks>
    <GoogleMark>
      <Letter $c="#4285f4">G</Letter>
      <Letter $c="#ea4335">o</Letter>
      <Letter $c="#fbbc05">o</Letter>
      <Letter $c="#4285f4">g</Letter>
      <Letter $c="#34a853">l</Letter>
      <Letter $c="#ea4335">e</Letter>
    </GoogleMark>
    <SearchBar>
      <svg width="14" height="14" viewBox="0 0 14 14" fill="none" stroke="#5f6368" strokeWidth="1.500">
        <circle cx="5.500" cy="5.500" r="4.500" />
        <path d="M9 9l4.500 4.500" />
      </svg>
      Search Google or type a URL
    </SearchBar>
    <ShortcutGrid>
      {shortcuts.map((item) => (
        <Shortcut key={item.label}>
          <ShortcutDisc>
            <Favicon kind={item.icon} size={item.icon === "ms" ? 21 : 20} />
          </ShortcutDisc>
          {item.label}
        </Shortcut>
      ))}
    </ShortcutGrid>
    <CustomizeBtn>
      <svg width="11" height="11" viewBox="0 0 12 12" fill="#1a73e8">
        <path d="M0 12V9.500L7.500 2 10 4.500 2.500 12zM8.500 1L9.500 0 12 2.500 11 3.500z" />
      </svg>
      Customize Chrome
    </CustomizeBtn>
  </NewTabPage>
);

const RemoteTaskbar = () => (
  <Taskbar $h={32}>
    <TaskSlot $w={42}>
      <WindowsLogo size={14} />
    </TaskSlot>
    <TaskSlot $w={42} $lit>
      <ChromeApp size={22} />
    </TaskSlot>
    <TaskSlot $w={42}>
      <OutlookApp size={22} />
    </TaskSlot>
    <TaskSlot $w={42}>
      <ExplorerApp size={22} />
    </TaskSlot>
    <TaskSlot $w={42}>
      <ExcelApp size={20} />
    </TaskSlot>
    <TaskSlot $w={42}>
      <VsApp size={22} />
    </TaskSlot>
    <TaskSlot $w={42}>
      <VsCodeApp size={22} />
    </TaskSlot>
    <TaskSlot $w={42}>
      <ToolApp size={22} />
    </TaskSlot>
    <TaskSlot $w={42}>
      <DynApp size={22} />
    </TaskSlot>
    <TaskSlot $w={42}>
      <TeamsApp size={24} status />
    </TaskSlot>
    <Tray $font={11.5}>
      <TrayItem $w={22}>
        <CloudIcon w={19} />
      </TrayItem>
      <TrayItem $w={74} $ml={7} $start $gap={7}>
        <span>4°C</span>
        <span>Bewölkt</span>
      </TrayItem>
      <TrayItem $w={12} $ml={8}>
        <ChevronUp w={11} />
      </TrayItem>
      <TrayItem $w={8} $ml={10}>
        <MicTray h={14} />
      </TrayItem>
      <TrayItem $w={14} $ml={10}>
        <WifiIcon w={12} />
      </TrayItem>
      <TrayItem $w={14} $ml={6}>
        <VolumeIcon w={14} />
      </TrayItem>
      <TrayItem $w={56} $ml={3}>
        <Clock $size={10.3} $lh={16}>
          4:42 PM
          <br />
          3/6/2022
        </Clock>
      </TrayItem>
      <TrayItem $w={16} $ml={10}>
        <NoteIcon w={14} />
      </TrayItem>
      <TrayEdge $ml={15} $mr={3} />
    </Tray>
  </Taskbar>
);

const LocalTaskbar = () => (
  <Taskbar $h={50}>
    <WinStart>
      <WindowsLogo />
    </WinStart>
    <SearchField>
      <svg width="19" height="19" viewBox="0 0 19 19" fill="none" stroke="#222" strokeWidth="1.200">
        <circle cx="11.500" cy="7.500" r="6.500" />
        <path d="M7 12.500L1 18.500" />
      </svg>
      Type here to search
    </SearchField>
    <TaskSlot $w={64}>
      <svg width="20" height="22" viewBox="0 0 20 22" fill="none" stroke="#fff" strokeWidth="1.200">
        <path d="M2 1v3h12V1M3 7h10v8H3zM2 21v-3h12v3M18 1v4M18 18v3" />
        <rect x="16.500" y="9" width="3" height="3" fill="#fff" stroke="none" />
      </svg>
    </TaskSlot>
    <TaskSlot $w={62}>
      <SnipApp size={32} />
    </TaskSlot>
    <TaskSlot $w={62} $running>
      <ExplorerApp size={30} />
    </TaskSlot>
    <TaskSlot $w={62} $running>
      <OutlookApp size={30} />
    </TaskSlot>
    <TaskSlot $w={62} $running>
      <EdgeApp size={30} />
    </TaskSlot>
    <TaskSlot $w={62} $running $lit>
      <TeamsApp size={32} />
    </TaskSlot>
    <TaskSlot $w={62} $running>
      <VsApp size={30} />
    </TaskSlot>
    <TaskSlot $w={62} $running>
      <ExcelApp size={30} />
    </TaskSlot>
    <TaskSlot $w={62} $running>
      <PaintApp size={32} />
    </TaskSlot>
    <Tray $font={17}>
      <TrayItem $w={40}>
        <CloudIcon w={28} />
      </TrayItem>
      <TrayItem $w={112} $ml={5} $start $gap={11}>
        <span>4°C</span>
        <span>Bewölkt</span>
      </TrayItem>
      <TrayItem $w={18} $ml={9}>
        <ChevronUp w={17} />
      </TrayItem>
      <TrayItem $w={14} $ml={13}>
        <MicTray h={21} />
      </TrayItem>
      <TrayItem $w={20} $ml={14}>
        <BatteryIcon w={20} />
      </TrayItem>
      <TrayItem $w={18} $ml={12}>
        <WifiIcon w={16} />
      </TrayItem>
      <TrayItem $w={20} $ml={10}>
        <VolumeIcon w={20} />
      </TrayItem>
      <TrayItem $w={90} $ml={2}>
        <Clock $size={15} $lh={22}>
          4:42 PM
          <br />
          3/6/2022
        </Clock>
      </TrayItem>
      <TrayItem $w={30} $ml={7}>
        <svg width="21" height="19" viewBox="0 0 21 19" fill="#fff">
          <path d="M0 0h21v15H8l-4 4v-4H0z" />
          <path d="M4 4h13M4 7.500h13M4 11h8" stroke="#1b2a4c" />
        </svg>
        <NoteBadge>2</NoteBadge>
      </TrayItem>
      <TrayEdge $ml={20} $mr={5} />
    </Tray>
  </Taskbar>
);

const Chat = () => (
  <ChatPanel>
    <ChatHeader>
      Chat
      <ThinX size={16} />
    </ChatHeader>
    <MessageList>
      <Bubble $top={-28}>
        to exit..." );
        <br />
        Console.ReadKey(true);
      </Bubble>
      <Bubble $pb={10}>
        <Author>
          Adler, Rares Ciprian (ext) (ADV D EU RO OPS2 7) <Stamp $ml={6}>4:08 PM</Stamp>
        </Author>
        <MsgBody>merge?</MsgBody>
      </Bubble>
      <LastRead>
        <ReadLine />
        Last read
        <ReadLine />
      </LastRead>
      <Bubble $top={20} $pb={19}>
        <Author>
          Adler, Rares Ciprian (ext) (ADV D EU RO OPS2 7) <Stamp $ml={6}>4:39 PM</Stamp>
        </Author>
        <MsgLink>
          https://docs.microsoft.com/en-
          <br />
          us/dotnet/api/microsoft.xrm.sdk.ior
          <br />
          ganizationservice.retrievemultiple?
          <br />
          view=dynamics-general-ce-9
        </MsgLink>
        <FolderCard logo>
          <CardText>
            <CardTitle>IOrganiza...</CardTitle>
            Retrieves a
            <br />
            collection of...
            <CardHost>
              docs.microsof
              <br />
              t.com
            </CardHost>
          </CardText>
        </FolderCard>
      </Bubble>
      <Bubble $own>
        <Stamp>4:39 PM</Stamp>
        <MsgLink>
          Use XRM tooling to create data
          <br />
          (Microsoft Dataverse) - Power Apps
          <br />| Microsoft Docs
        </MsgLink>
        <FolderCard />
      </Bubble>
    </MessageList>
    <Composer>
      <InputBox>Type a new message</InputBox>
      <ComposerTools>
        {composerIcons.map((icon) => (
          <ComposerTool key={icon.key}>{icon}</ComposerTool>
        ))}
        <Spacer />
        <ComposerTool>
          <svg {...strokeIcon}>
            <path d="M2 2l18 9-18 9 3.500-9zM5.500 11H20" />
          </svg>
        </ComposerTool>
      </ComposerTools>
    </Composer>
  </ChatPanel>
);

export default function App() {
  return (
    <Frame>
      <GlobalStyle />
      <TitleBar>
        <WindowTitle>Adler, Rares Ciprian (ext) (ADV D EU RO OPS2 7)</WindowTitle>
        <WindowControls>
          <WinBtn $w={44}>
            <svg width="16" height="2" viewBox="0 0 16 2" stroke="#ddd">
              <path d="M0 1h16" />
            </svg>
          </WinBtn>
          <WinBtn $w={54} $hot>
            <svg width="18" height="22" viewBox="0 0 18 22" fill="none" stroke="#ddd">
              <rect x=".5" y="4.500" width="13" height="17" />
              <path d="M4 4V.5h13.500V18H14" />
            </svg>
          </WinBtn>
          <WinBtn $w={46}>
            <ThinX size={16} />
          </WinBtn>
        </WindowControls>
      </TitleBar>
      <MeetingBar>
        <svg width="23" height="26" viewBox="0 0 23 26" fill="none" stroke="#d0d0d0" strokeWidth="1.300">
          <path d="M11.500 1c2 2 6 4 10 4v8c0 6-4 10-10 12C5.500 23 1.500 19 1.500 13V5c4 0 8-2 10-4z" />
        </svg>
        <Timer>33:55</Timer>
        <Spacer />
        <RequestBtn>Request control</RequestBtn>
        <BarDivider />
        <BarIcon>
          <svg width="27" height="27" viewBox="0 0 27 27" fill="none" stroke="#d0d0d0" strokeWidth="1.300">
            <circle cx="10" cy="6" r="4.500" />
            <circle cx="21" cy="7" r="3.500" />
            <path d="M2 13h16v7a6 6 0 0 1-6 6H8a6 6 0 0 1-6-6zM21 13h5v6c0 3-2 5-5 5" />
          </svg>
        </BarIcon>
        <BarIcon $active>
          <svg width="27" height="27" viewBox="0 0 27 27" fill="none" stroke="#d0d0d0" strokeWidth="1.300">
            <path d="M13.500 1.500a12 12 0 0 1 0 24H2.500c1.500-2 2-3 1-5A12 12 0 0 1 13.500 1.500z" />
            <path d="M9.500 11h8M9.500 16h5" />
          </svg>
        </BarIcon>
        <BarIcon>
          <svg width="22" height="6" viewBox="0 0 22 6" fill="#d0d0d0">
            <circle cx="3" cy="3" r="2.500" />
            <circle cx="11" cy="3" r="2.500" />
            <circle cx="19" cy="3" r="2.500" />
          </svg>
        </BarIcon>
        <BarDivider $ml={15} $mr={15} />
        <BarIcon>
          <svg width="26" height="26" viewBox="0 0 26 26">
            <rect x="0" y="4" width="17" height="18" rx="3" fill="#5c5c5c" />
            <path d="M19 9l7-3v14l-7-3z" fill="#5c5c5c" />
            <path d="M2 0l22 26" stroke="#212121" strokeWidth="3" />
            <path d="M1 0l22 26" stroke="#8a8a8a" strokeWidth="1" />
          </svg>
        </BarIcon>
        <BarIcon>
          <svg width="18" height="28" viewBox="0 0 18 28" fill="none" stroke="#fff" strokeWidth="1.500">
            <rect x="5" y="0" width="8" height="18" rx="4" fill="#fff" stroke="none" />
            <path d="M1 12a8 8 0 0 0 16 0M9 20v8" />
          </svg>
        </BarIcon>
        <BarIcon>
          <svg width="26" height="26" viewBox="0 0 26 26">
            <rect x="0" y="1" width="26" height="24" rx="3" fill="#fff" />
            <path d="M13 20V6M8.500 10.500L13 6l4.500 4.500" fill="none" stroke="#212121" strokeWidth="1.500" />
          </svg>
        </BarIcon>
        <LeaveBtn>
          <svg width="25" height="14" viewBox="0 0 25 14" fill="#fff">
            <path d="M0 10C1 4 6 1 12.500 1S24 4 25 10c0 2-1 3-3 3h-2c-2 0-2.500-1-2.500-3 0-2-2-3-5-3s-5 1-5 3c0 2-.5 3-2.500 3H3c-2 0-3-1-3-3z" />
          </svg>
          Leave
        </LeaveBtn>
      </MeetingBar>
      <Body>
        <Stage>
          <TileRow>
            <MainTile>
              <Avatar $size={94} $bg="#e8ced2" $fg="#5e1a27" $font={37}>
                RA
              </Avatar>
              <TileName>Adler, Rares Cip...</TileName>
            </MainTile>
            <SideTile>
              <Avatar $size={70} $bg="#fcefcb" $fg="#835b0b" $font={27}>
                VG
              </Avatar>
            </SideTile>
          </TileRow>
          <Share>
            <ChromeWindow>
              <ChromeTabs />
              <ChromeBar />
              <Bookmarks />
              <NewTab />
              <FolderMenu>
                {folderItems.map((item) => (
                  <FolderRow key={item.label}>
                    <Favicon kind={item.icon} size={14} />
                    {item.label}
                  </FolderRow>
                ))}
              </FolderMenu>
              <Cursor width="9" height="13" viewBox="0 0 9 13" fill="#fff" stroke="#222" strokeWidth=".8">
                <path d="M1 1v10l2.500-2.300L5.500 12l1.500-.7-2-3.300H8z" />
              </Cursor>
            </ChromeWindow>
            <RemoteTaskbar />
          </Share>
          <CaptionTag>Adler, Rares Ciprian (ext) (ADV D EU RO OPS2 7)</CaptionTag>
        </Stage>
        <Chat />
      </Body>
      <LocalTaskbar />
    </Frame>
  );
}
